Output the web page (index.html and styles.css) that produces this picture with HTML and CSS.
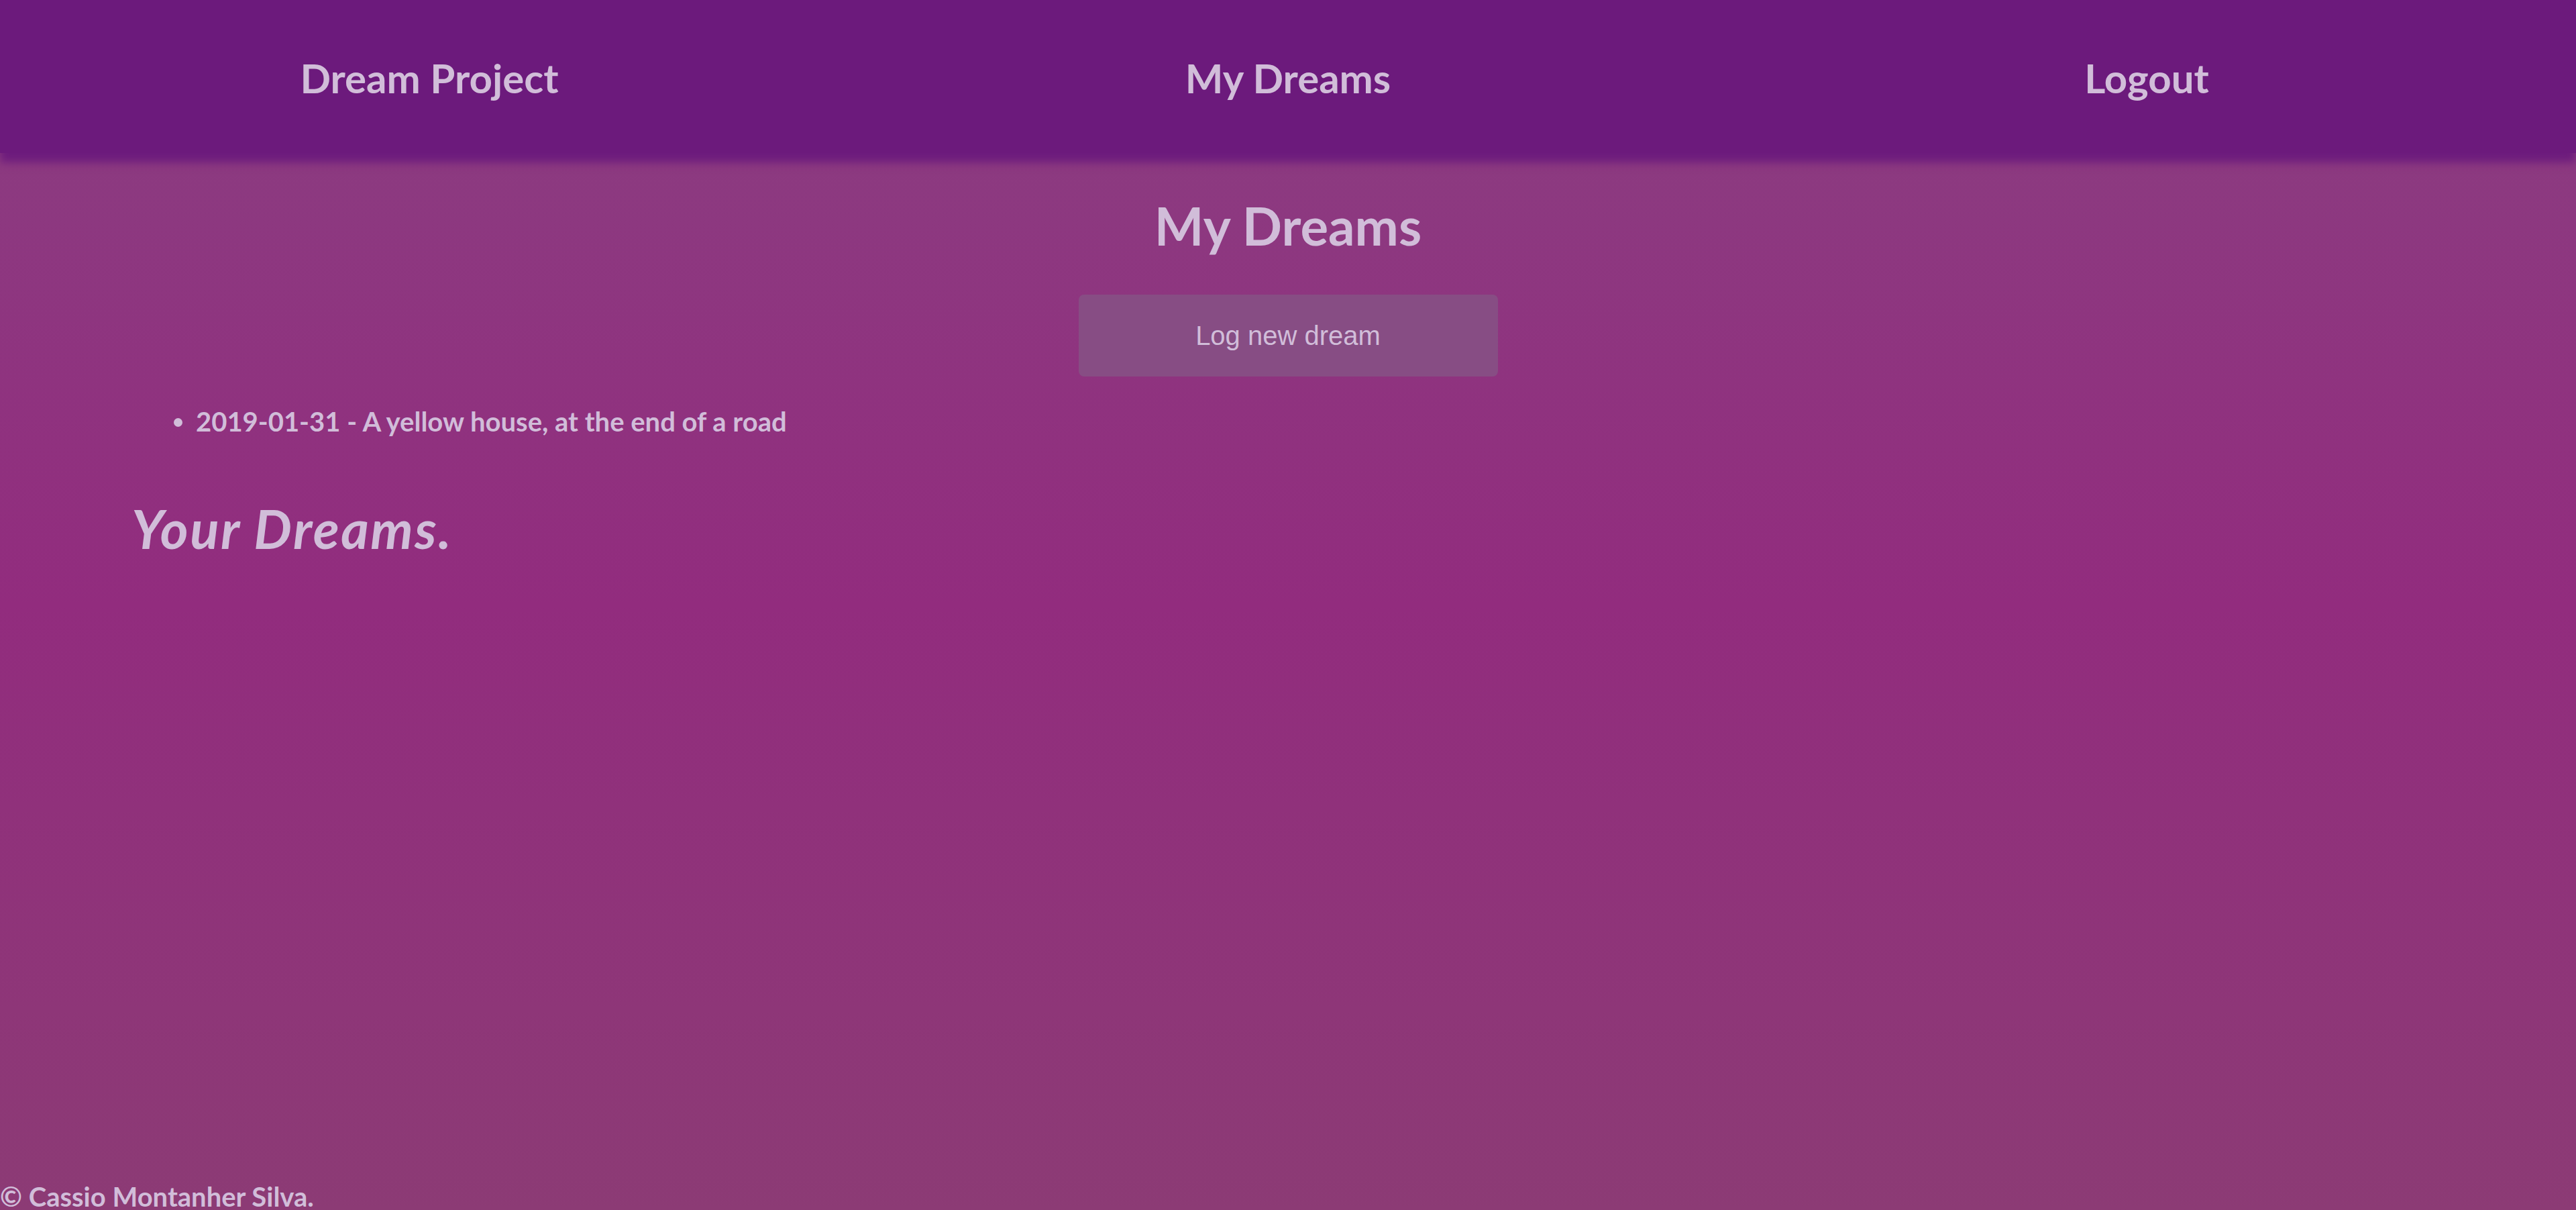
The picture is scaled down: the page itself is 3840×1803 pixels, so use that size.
FILE: index.html
```html
<!DOCTYPE html>
<html lang="en">
<head>
<meta charset="utf-8">
<title>Dream Project</title>
<link rel="stylesheet" href="styles.css">
</head>
<body>
<div class="page">
  <nav class="nav">
    <a class="nav-item" href="#">Dream Project</a>
    <a class="nav-item" href="#">My Dreams</a>
    <a class="nav-item" href="#">Logout</a>
  </nav>
  <main class="main">
    <h1 class="title">My Dreams</h1>
    <div class="actions">
      <button class="btn" type="button">Log new dream</button>
    </div>
    <ul class="dream-list">
      <li class="dream-item">2019-01-31 - A yellow house, at the end of a road</li>
    </ul>
    <h2 class="tagline">Your Dreams.</h2>
  </main>
  <footer class="footer">© Cassio Montanher Silva.</footer>
</div>
</body>
</html>
```
FILE: styles.css
```css
html, body {
  margin: 0;
  padding: 0;
}
body {
  font-family: Lato, "Noto Sans", sans-serif;
  color: #d1bdd9;
  background: linear-gradient(to bottom, #8a3f81 0%, #922c7e 50%, #8c3b75 100%);
  min-height: 100vh;
}
.page {
  display: flex;
  flex-direction: column;
  min-height: 100vh;
}
.nav {
  display: flex;
  align-items: center;
  height: 224px;
  padding-top: 4px;
  background: #6c1a7c;
  box-shadow: 0 14px 12px rgba(108, 26, 124, 0.95);
  position: relative;
  z-index: 1;
}
.nav-item {
  flex: 1;
  text-align: center;
  font-size: 60px;
  font-weight: 700;
  line-height: 72px;
  color: #d1bdd9;
  text-decoration: none;
}
.main {
  padding: 60px 196px 0;
}
.title {
  margin: 0;
  text-align: center;
  font-size: 78px;
  font-weight: 700;
  line-height: 96px;
}
.actions {
  display: flex;
  justify-content: center;
  margin-top: 55px;
}
.btn {
  width: 625px;
  height: 122px;
  padding: 0;
  border: none;
  border-radius: 8px;
  background: #874d84;
  color: #d1bdd9;
  font-family: "Liberation Sans", Arial, sans-serif;
  font-size: 40px;
  line-height: 46px;
}
.dream-list {
  margin: 43px 0 0;
  padding-left: 96px;
}
.dream-item {
  font-size: 40px;
  font-weight: 700;
  line-height: 48px;
}
.tagline {
  margin: 87px 0 0;
  font-size: 80px;
  font-weight: 700;
  font-style: italic;
  letter-spacing: 2.5px;
  line-height: 96px;
}
.footer {
  margin-top: auto;
  font-size: 40px;
  font-weight: 700;
  line-height: 40px;
}
```
